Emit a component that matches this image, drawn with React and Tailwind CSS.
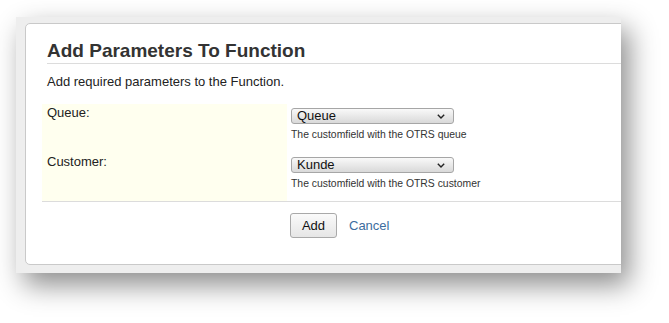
import React from 'react';

const font = { fontFamily: '"Liberation Sans", Arial, sans-serif' };

function FakeSelect({ value }) {
    return (
        <div className="flex items-center justify-between w-[163px] h-[16px] pl-[5px] pr-[8px] border border-[#a6a6a6] rounded-[3px] bg-gradient-to-b from-[#f9f9f9] to-[#d9d9d9] text-[13px] leading-[14px] text-[#111]">
            <span>{value}</span>
            <svg width="8" height="5" viewBox="0 0 8 5" fill="none">
                <path d="M0.8 0.8 L4 4 L7.2 0.8" stroke="#222" strokeWidth="1.4" />
            </svg>
        </div>
    );
}

function ParamRow({ label, value, help, last }) {
    return (
        <div className="grid grid-cols-[245px_1fr]">
            <div className="bg-[#ffffef] pl-[5px] pt-[1px] text-[13px] leading-[16px] text-[#222]">
                {label}
            </div>
            <div className={`pl-[4px] pt-[4px] ${last ? 'pb-[10px]' : 'pb-[11px]'}`}>
                <FakeSelect value={value} />
                <p className="mt-[4px] text-[10.4px] leading-[14px] text-[#333]">{help}</p>
            </div>
        </div>
    );
}

export default function App() {
    return (
        <div className="w-[669px] h-[323px] bg-white pl-[16px] pt-[17px]" style={font}>
            <div className="w-[605px] h-[256px] bg-[#eeeeee] overflow-hidden pl-[9px] pt-[6px] shadow-[8px_12px_26px_rgba(0,0,0,0.45)]">
                <div className="w-[640px] h-[242px] bg-white border border-[#c9c9c9] rounded-l-[5px] pl-[16px]">
                    <div className="ml-[5px] pt-[16px] pb-[1px] border-b border-[#dcdcdc]">
                        <h2 className="text-[19px] leading-[22px] font-bold text-[#333]">Add Parameters To Function</h2>
                    </div>
                    <p className="ml-[5px] mt-[10px] text-[13px] leading-[16px] text-[#222]">
                        Add required parameters to the Function.
                    </p>

                    <div className="mt-[14px] border-b border-[#dcdcdc]">
                        <ParamRow label="Queue:" value="Queue" help="The customfield with the OTRS queue" />
                        <ParamRow label="Customer:" value="Kunde" help="The customfield with the OTRS customer" last />
                    </div>

                    <div className="flex items-center gap-[12px] ml-[248px] mt-[11px]">
                        <button className="w-[47px] h-[25px] border border-[#a9a9a9] rounded-[3px] bg-gradient-to-b from-[#fafafa] to-[#e6e6e6] text-[13px] text-[#111]">
                            Add
                        </button>
                        <a className="text-[13px] text-[#3d6d9e]">Cancel</a>
                    </div>
                </div>
            </div>
        </div>
    );
}
